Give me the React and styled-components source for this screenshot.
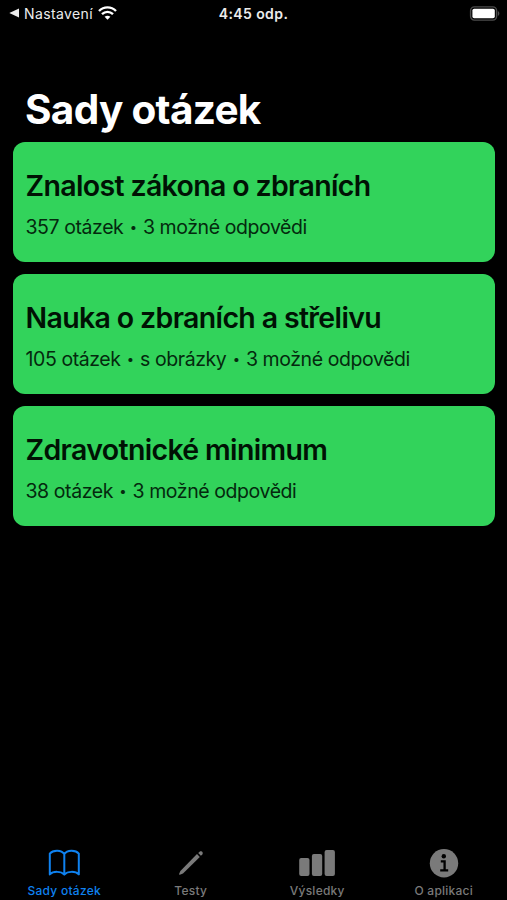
import React, { useState } from "react";
import styled, { createGlobalStyle } from "styled-components";

const GlobalStyle = createGlobalStyle`
  body {
    margin: 0;
    background: #000000;
    font-family: Inter, "Liberation Sans", sans-serif;
  }
`

const Screen = styled.div`
  display: flex;
  flex-direction: column;
  height: 900px;
  overflow: hidden;
  background: #000000;
`

const StatusBar = styled.div`
  display: grid;
  grid-template-columns: 1fr auto 1fr;
  align-items: center;
  height: 26px;
  padding: 0 7px 0 9px;
  color: #ececec;
`

const BackLink = styled.div`
  display: flex;
  align-items: center;
  font-size: 14px;
  letter-spacing: 0.38px;

  span {
    margin: 0 5px 0 5px;
  }
`

const Clock = styled.div`
  margin-left: -2px;
  font-size: 14px;
  font-weight: 600;
  letter-spacing: 0.4px;
`

const Battery = styled.svg`
  justify-self: end;
`

const Title = styled.h1`
  margin: 58px 0 0 25px;
  font-size: 40.5px;
  line-height: 52px;
  font-weight: 700;
  letter-spacing: -0.7px;
  color: #ffffff;
`

const CardList = styled.div`
  display: flex;
  flex-direction: column;
  flex: 1;
  gap: 12px;
  padding: 6.4px 12.5px 0 13px;
`

const Card = styled.div`
  box-sizing: border-box;
  height: 120px;
  padding: 25.2px 12.5px;
  border-radius: 12px;
  background: #32d35b;
  color: #001204;
`

const CardTitle = styled.h2`
  margin: 0;
  font-size: 28.5px;
  line-height: 36px;
  font-weight: 600;
  letter-spacing: -0.65px;
  white-space: nowrap;
`

const CardInfo = styled.div`
  display: flex;
  margin-top: 9px;
  font-size: 19.5px;
  line-height: 28px;
  letter-spacing: -0.42px;
  color: #04290e;
  white-space: nowrap;
`

const Dot = styled.span`
  width: 19.5px;
  font-size: 13px;
  line-height: 29px;
  text-align: center;
`

const TabBar = styled.div`
  display: grid;
  grid-template-columns: repeat(4, 1fr);
  height: 56px;
  padding-left: 1px;
`

const Tab = styled.button`
  display: flex;
  flex-direction: column;
  align-items: center;
  padding: 0;
  border: none;
  background: none;
  font-family: inherit;
  font-size: 12px;
  line-height: 16px;
  font-weight: 500;
  letter-spacing: 0.25px;
  color: ${props => props.$active ? "#0f82f0" : "#7a7a7a"};

  svg {
    display: block;
    margin-bottom: 3px;
  }
`

const BookIcon = () => (
    <svg width="36" height="36" viewBox="0 0 36 36" fill="none" stroke="currentColor" strokeWidth="2" strokeLinejoin="round">
        <path d="M18.3 10C15.5 5.6 7 5.6 3.8 9.6V30.4C7.2 27 15 27 18.3 30.6C21.6 27 29.4 27 32.8 30.4V9.6C29.6 5.6 21.1 5.6 18.3 10ZM18.3 10V30.5" />
    </svg>
)

const PencilIcon = () => (
    <svg width="36" height="36" viewBox="0 0 36 36" fill="currentColor">
        <path d="M24 10.1L26.8 12.9L10 29.5L6.9 30.8C6.3 31 5.9 30.6 6.1 30L7.4 26.9Z" />
        <path d="M25.2 9.1L26.6 7.8C28.3 6.3 30.8 8.6 29.3 10.4L27.9 11.8Z" />
    </svg>
)

const BarsIcon = () => (
    <svg width="36" height="36" viewBox="0 0 36 36" fill="currentColor">
        <rect x="0.2" y="14" width="10.3" height="18" rx="2" />
        <rect x="12.9" y="10" width="10.3" height="22" rx="2" />
        <rect x="25.6" y="6" width="10.3" height="26" rx="2" />
    </svg>
)

const InfoIcon = () => (
    <svg width="36" height="36" viewBox="0 0 36 36">
        <circle cx="18" cy="19.2" r="14.2" fill="currentColor" />
        <circle cx="17.8" cy="12.3" r="2.2" fill="#000000" />
        <path d="M14.8 17.3H18.6V26.3M14.2 26.3H22.2" fill="none" stroke="#000000" strokeWidth="2.3" />
    </svg>
)

const questionSets = [
    {title: "Znalost zákona o zbraních", info: ["357 otázek", "3 možné odpovědi"]},
    {title: "Nauka o zbraních a střelivu", info: ["105 otázek", "s obrázky", "3 možné odpovědi"]},
    {title: "Zdravotnické minimum", info: ["38 otázek", "3 možné odpovědi"]},
]

const tabs = [
    {label: "Sady otázek", Icon: BookIcon},
    {label: "Testy", Icon: PencilIcon},
    {label: "Výsledky", Icon: BarsIcon},
    {label: "O aplikaci", Icon: InfoIcon},
]

const App = () => {
    const [activeTab, setActiveTab] = useState(0);

    return (
        <Screen>
            <GlobalStyle />
            <StatusBar>
                <BackLink>
                    <svg width="10" height="10" viewBox="0 0 10 10" fill="currentColor">
                        <path d="M0.3 5L10 0.5V9.5Z" />
                    </svg>
                    <span>Nastavení</span>
                    <svg width="19" height="14" viewBox="0 0 19 14" fill="none" stroke="#ffffff" strokeWidth="2.4">
                        <path d="M1 5C5.8 0.2 13.2 0.2 18 5" />
                        <path d="M4 8.2C7.2 5.1 11.8 5.1 15 8.2" />
                        <path d="M9.5 13.8L6.6 10.8C8.3 9.3 10.7 9.3 12.4 10.8Z" fill="#ffffff" stroke="none" />
                    </svg>
                </BackLink>
                <Clock>4:45 odp.</Clock>
                <Battery width="31" height="15" viewBox="0 0 31 15">
                    <rect x="1.6" y="0.9" width="26" height="13.2" rx="3.8" fill="none" stroke="#4c4c4c" strokeWidth="1.4" />
                    <rect x="3.4" y="2.7" width="22.4" height="9.6" rx="1.8" fill="#ffffff" />
                    <path d="M28.9 5V10C30.9 9 30.9 6 28.9 5Z" fill="#4c4c4c" />
                </Battery>
            </StatusBar>
            <Title>Sady otázek</Title>
            <CardList>
                {questionSets.map(set => (
                    <Card key={set.title}>
                        <CardTitle>{set.title}</CardTitle>
                        <CardInfo>
                            {set.info.map((text, index) => (
                                <React.Fragment key={text}>
                                    {index > 0 && <Dot>•</Dot>}
                                    <span>{text}</span>
                                </React.Fragment>
                            ))}
                        </CardInfo>
                    </Card>
                ))}
            </CardList>
            <TabBar>
                {tabs.map(({label, Icon}, index) => (
                    <Tab key={label} $active={index === activeTab} onClick={() => setActiveTab(index)}>
                        <Icon />
                        {label}
                    </Tab>
                ))}
            </TabBar>
        </Screen>
    )
}
export default App;
